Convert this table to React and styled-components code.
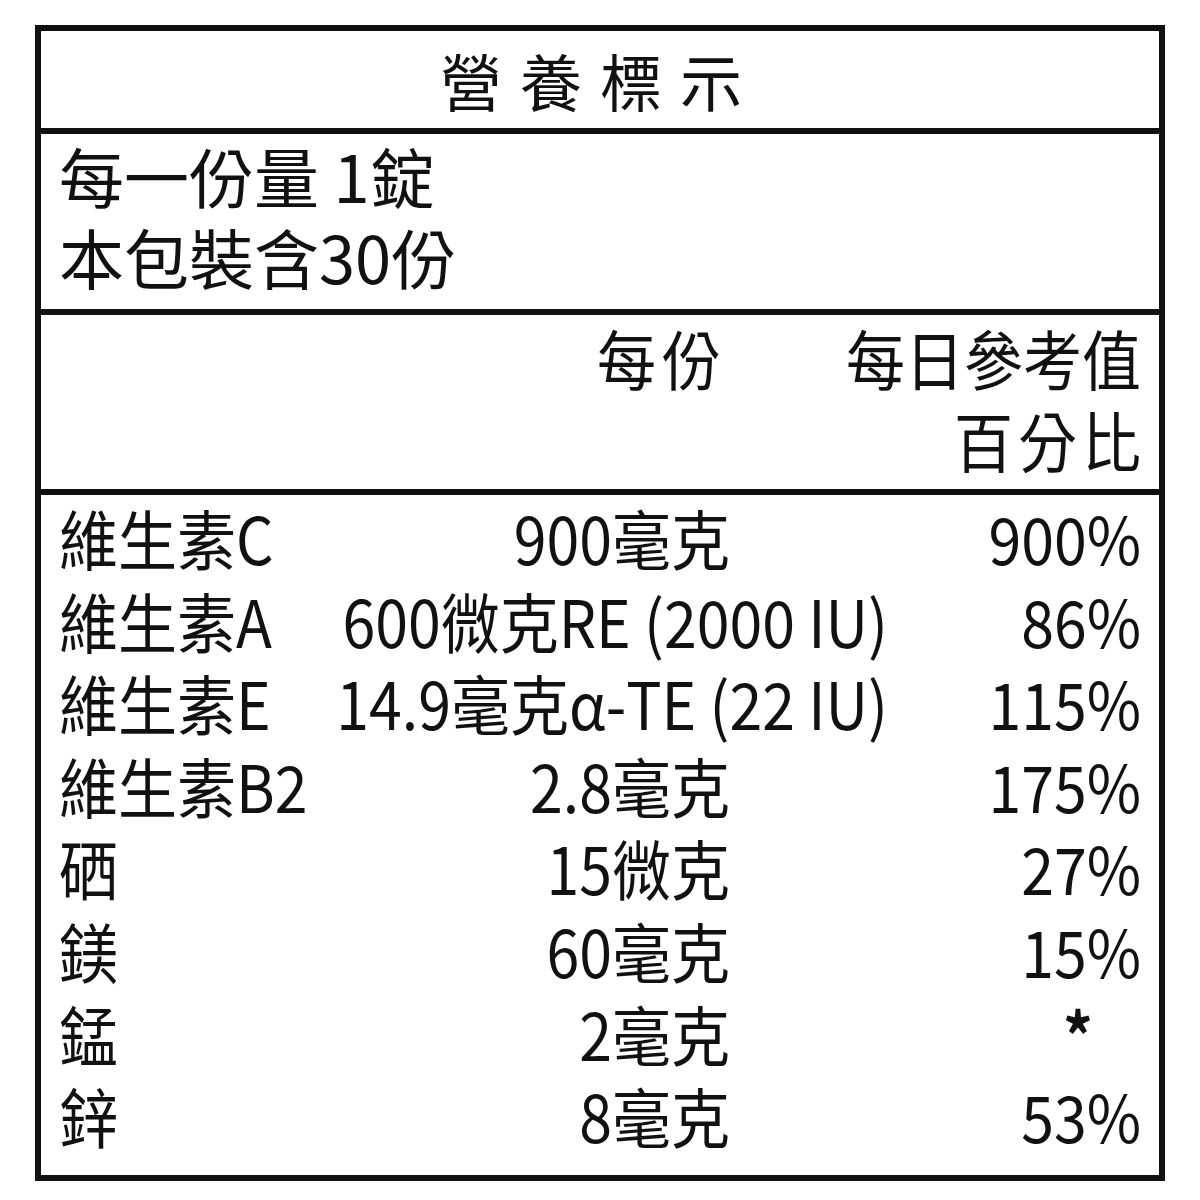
import React from 'react';
import styled, { createGlobalStyle, css } from 'styled-components';

const GlobalStyle = createGlobalStyle`
  body {
    margin: 0;
    background: #ffffff;
    color: #111111;
    font-family: "Noto Sans CJK TC", "Noto Sans CJK SC", sans-serif;
  }
`;

// the label text is drawn a little taller than it is wide
const tall = css`
  display: inline-block;
  transform: scaleY(1.1);
  transform-origin: center;
  white-space: nowrap;
`;

const Label = styled.div`
  box-sizing: border-box;
  width: 1130px;
  margin: 25px 0 0 35px;
  border: 6px solid #111111;
  background: #ffffff;
`;

const Title = styled.div`
  height: 97px;
  display: flex;
  align-items: center;
  justify-content: center;
  font-size: 62px;
  letter-spacing: 18px;
  border-bottom: 6px solid #111111;
`;

const Section = styled.div`
  height: ${props => props.height}px;
  box-sizing: border-box;
  padding: ${props => props.top}px 18px 0 18px;
  border-bottom: ${props => (props.last ? 'none' : '6px solid #111111')};
  font-size: 59px;
  line-height: 82px;
`;

const Serving = styled.div`
  font-size: 65px;
  line-height: 81px;
  white-space: nowrap;
`;

const HeadGrid = styled.div`
  display: grid;
  grid-template-columns: 286px 385px 158px 253px;
`;

const Grid = styled.div`
  display: grid;
  grid-template-columns: 286px 385px 158px 253px;
  grid-auto-rows: 82.6px;
`;

const Name = styled.div`
  grid-column: 1;
  ${tall};
`;

const Amount = styled.div`
  grid-column: ${props => (props.wide ? '2 / 4' : '2')};
  justify-self: end;
  margin-right: ${props => props.offset || 0}px;
  letter-spacing: ${props => props.spacing || 0}px;
  ${tall};
`;

const Percent = styled.div`
  grid-column: 4;
  justify-self: end;
  margin-right: ${props => (props.star ? 48 : props.offset || 0)}px;
  letter-spacing: ${props => props.spacing || 0}px;
  font-weight: ${props => (props.star ? 700 : 400)};
  ${tall};
`;

const rows = [
  { name: '維生素C', amount: '900毫克', pct: '900%' },
  { name: '維生素A', amount: '600微克RE (2000 IU)', pct: '86%', wide: true },
  { name: '維生素E', amount: '14.9毫克α-TE (22 IU)', pct: '115%', wide: true },
  { name: '維生素B2', amount: '2.8毫克', pct: '175%' },
  { name: '硒', amount: '15微克', pct: '27%' },
  { name: '鎂', amount: '60毫克', pct: '15%' },
  { name: '錳', amount: '2毫克', pct: '*' },
  { name: '鋅', amount: '8毫克', pct: '53%' },
];

export default function App() {
  return (
    <>
      <GlobalStyle />
      <Label>
        <Title>營養標示</Title>
        <Section height={181} top={1}>
          <Serving>每一份量 1錠</Serving>
          <Serving>本包裝含30份</Serving>
        </Section>
        <Section height={180} top={2}>
          <HeadGrid>
            <Name />
            <Amount offset={3} spacing={6}>每份</Amount>
            <Percent>每日參考值</Percent>
            <Percent offset={-5} spacing={5}>百分比</Percent>
          </HeadGrid>
        </Section>
        <Section height={680} top={2} last>
          <Grid>
            {rows.map(r => (
              <React.Fragment key={r.name}>
                <Name>{r.name}</Name>
                <Amount wide={r.wide}>{r.amount}</Amount>
                <Percent star={r.pct === '*'}>{r.pct}</Percent>
              </React.Fragment>
            ))}
          </Grid>
        </Section>
      </Label>
    </>
  );
}
